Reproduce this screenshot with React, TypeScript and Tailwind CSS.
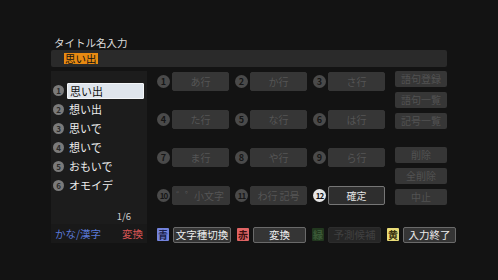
const font = "font-['Noto_Sans_CJK_JP','Noto_Sans',sans-serif]";

const candidates = ["思い出", "想い出", "思いで", "想いで", "おもいで", "オモイデ"];

const grid = [
  ["あ行", "か行", "さ行"],
  ["た行", "な行", "は行"],
  ["ま行", "や行", "ら行"],
  ["小文字", "わ行 記号", "確定"],
];

function Num({ n, active }: { n: number; active?: boolean }) {
  return (
    <div
      className={`w-[13px] h-[13px] shrink-0 rounded-full flex items-center justify-center font-bold leading-none ${
        n > 9 ? "text-[8px] tracking-[-1px]" : "text-[9px]"
      } ${active ? "bg-[#e6e6e6] text-[#111]" : "bg-[#4a4a4a] text-[#161616]"}`}
    >
      {n}
    </div>
  );
}

function SideBtn({ label }: { label: string }) {
  return (
    <div className="h-[16px] rounded-[2px] bg-[#363636] text-[#525252] text-[10px] leading-[16px] text-center">
      {label}
    </div>
  );
}

function ColorKey({ badge, label, cls, disabled }: { badge: string; label: string; cls: string; disabled?: boolean }) {
  return (
    <div className="flex items-center gap-[4px]">
      <div className={`w-[12px] h-[13px] rounded-[1px] text-[10px] leading-[13px] text-center font-bold ${cls}`}>{badge}</div>
      <div
        className={`h-[16px] rounded-[2px] text-[10.5px] leading-[14px] text-center border ${
          disabled ? "bg-[#262626] border-[#2c2c2c] text-[#404040]" : "bg-[#353535] border-[#6a6a6a] text-[#ececec]"
        } ${label === "文字種切換" ? "w-[58px]" : "w-[53px]"}`}
      >
        {label}
      </div>
    </div>
  );
}

export default function App() {
  return (
    <div className={`w-[498px] h-[280px] bg-[#131313] overflow-hidden ${font}`}>
      <div className="pt-[36px] pl-[54px] h-[50px] text-[10.5px] leading-[14px] text-[#dcdcdc]">タイトル名入力</div>
      <div className="ml-[51px] w-[396px] h-[17px] bg-[#2a2a2a] rounded-[2px] flex items-center pl-[13px]">
        <span className="bg-[#e88a12] text-[#111] text-[10.5px] leading-[11px] px-[1px]">思い出</span>
      </div>

      <div className="flex items-start mt-[4px] h-[153px]">
        <div className="ml-[51px] w-[96px] h-[153px] bg-[#1c1c1c] flex flex-col pt-[10px]">
          {candidates.map((c, i) => (
            <div key={c} className="h-[19px] flex items-center pl-[2px] gap-[3px]">
              <div className="w-[11px] h-[11px] rounded-full bg-[#7a7a7a] text-[#2a2a2a] text-[8px] font-bold flex items-center justify-center leading-none">
                {i + 1}
              </div>
              <div
                className={`w-[77px] h-[16px] pl-[2px] text-[11px] leading-[15px] rounded-[1px] ${
                  i === 0 ? "bg-[#dfe5ec] text-[#111] border border-[#f4f6f8]" : "text-[#ececec]"
                }`}
              >
                {c}
              </div>
            </div>
          ))}
          <div className="mt-auto mb-[1px] pr-[16px] text-right text-[9.5px] text-[#cfcfcf] leading-[14px]">1/6</div>
        </div>

        <div className="ml-[10px] mt-[1px] flex flex-col gap-[19px]">
          {grid.map((row, r) => (
            <div key={r} className="flex gap-[6px]">
              {row.map((label, c) => {
                const n = r * 3 + c + 1;
                const active = n === 12;
                return (
                  <div key={label} className="w-[72px] flex items-center gap-[2px]">
                    <Num n={n} active={active} />
                    <div
                      className={`flex-1 h-[19px] rounded-[2px] text-[10px] leading-[17px] text-center border whitespace-nowrap ${
                        active
                          ? "bg-[#2e2e2e] border-[#767676] text-[#e4e4e4]"
                          : "bg-[#363636] border-[#363636] text-[#555]"
                      }`}
                    >
                      {n === 10 ? (
                        <div className="flex justify-between pl-[3px] pr-[5px]">
                          <span className="tracking-[-1px]">゛゜</span>
                          <span>{label}</span>
                        </div>
                      ) : (
                        label
                      )}
                    </div>
                  </div>
                );
              })}
            </div>
          ))}
        </div>

        <div className="ml-[10px] w-[52px] flex flex-col">
          <div className="flex flex-col gap-[5px]">
            <SideBtn label="語句登録" />
            <SideBtn label="語句一覧" />
            <SideBtn label="記号一覧" />
          </div>
          <div className="flex flex-col gap-[5px] mt-[18px]">
            <SideBtn label="削除" />
            <SideBtn label="全削除" />
            <SideBtn label="中止" />
          </div>
        </div>
      </div>

      <div className="flex items-center">
        <div className="ml-[51px] w-[96px] h-[19px] bg-[#191919] flex items-center justify-between px-[4px] text-[10.5px]">
          <span className="text-[#5a78d6]">かな/漢字</span>
          <span className="text-[#d85454]">変換</span>
        </div>
        <div className="ml-[10px] flex items-center gap-[6px] mt-[2px]">
          <ColorKey badge="青" label="文字種切換" cls="bg-[#7383dc] text-[#1a1f4a]" />
          <ColorKey badge="赤" label="変換" cls="bg-[#e06464] text-[#3a0f0f]" />
          <ColorKey badge="緑" label="予測候補" disabled cls="bg-[#22381f] text-[#3c5a38]" />
          <ColorKey badge="黄" label="入力終了" cls="bg-[#e9dc78] text-[#3a3410]" />
        </div>
      </div>
    </div>
  );
}
